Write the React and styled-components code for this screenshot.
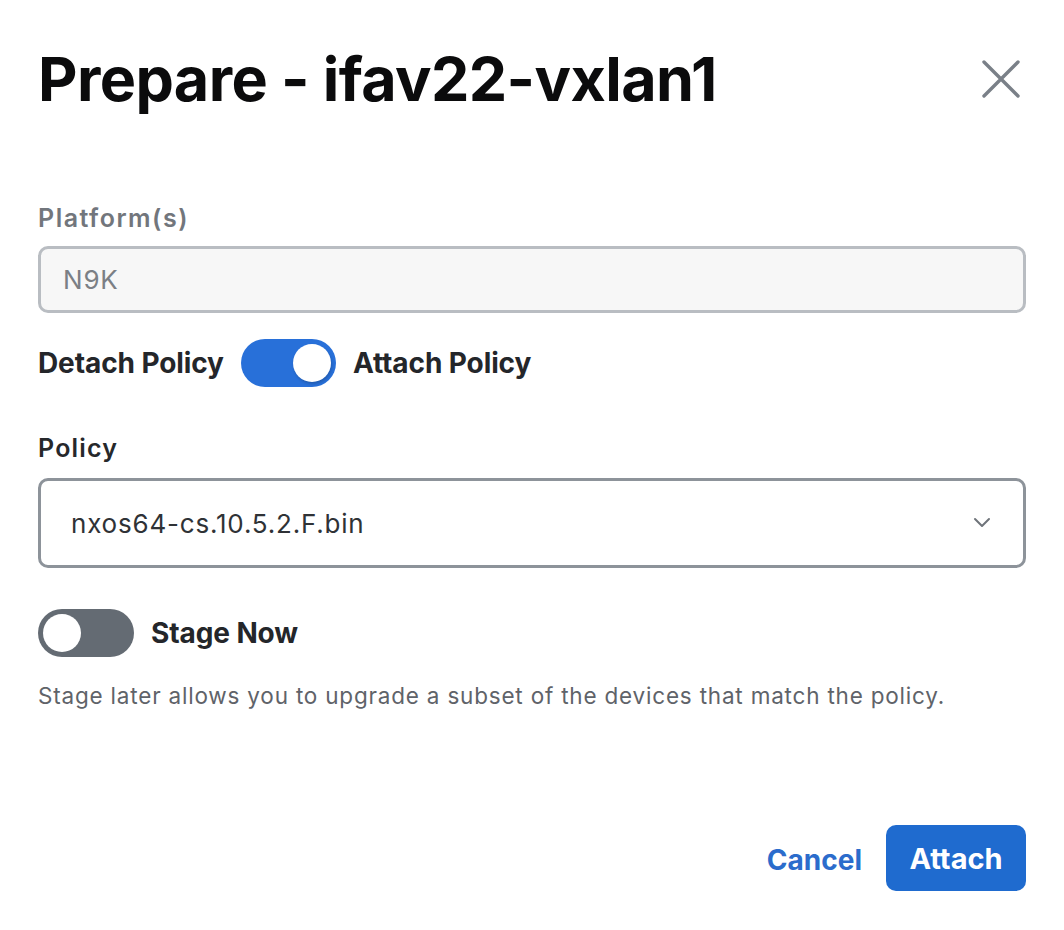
import React, { useState } from "react";
import styled, { createGlobalStyle } from "styled-components";

const Global = createGlobalStyle`
  html, body { margin: 0; padding: 0; background: #ffffff; }
  body { font-family: Inter, "Noto Sans", "Liberation Sans", sans-serif; -webkit-font-smoothing: antialiased; }
  * { box-sizing: border-box; }
`;

const Dialog = styled.div`
  width: 1064px;
  height: 930px;
  background: #fff;
  padding: 40px 38px 39px 38px;
  display: flex;
  flex-direction: column;
`;

const Header = styled.div`
  display: flex;
  align-items: center;
  justify-content: space-between;
  height: 78px;
`;

const Title = styled.h1`
  margin: 0;
  font-size: 61px;
  font-weight: 700;
  letter-spacing: -0.6px;
  color: #0b0b0c;
  line-height: 1;
`;

const CloseButton = styled.button`
  border: 0;
  background: none;
  padding: 0;
  width: 44px;
  height: 44px;
  margin-right: 3px;
  display: flex;
  align-items: center;
  justify-content: center;
  cursor: pointer;
`;

const Body = styled.div`
  margin-top: 84px;
  display: flex;
  flex-direction: column;
`;

const Label = styled.div`
  font-size: 25px;
  font-weight: 600;
  letter-spacing: ${(p) => (p.$muted ? 1.5 : 1.2)}px;
  color: ${(p) => (p.$muted ? "#72767c" : "#26282b")};
  line-height: 32px;
  margin-top: ${(p) => p.$mt || 0}px;
  margin-bottom: ${(p) => p.$gap || 12}px;
`;

const Field = styled.div`
  width: 988px;
  height: ${(p) => p.$h}px;
  border: 3px solid ${(p) => p.$border};
  border-radius: 10px;
  background: ${(p) => p.$bg};
  display: flex;
  align-items: center;
  justify-content: space-between;
  padding: 0 ${(p) => p.$pr}px 0 ${(p) => p.$pl}px;
  font-size: 26px;
  letter-spacing: 0.8px;
  color: ${(p) => p.$color};
`;

const ToggleRow = styled.div`
  display: flex;
  align-items: center;
  gap: ${(p) => p.$gap}px;
  height: 50px;
  margin-top: ${(p) => p.$mt}px;
`;

const ToggleLabel = styled.span`
  font-size: 28px;
  font-weight: 700;
  color: #24262a;
  letter-spacing: -0.1px;
`;

const Track = styled.button`
  position: relative;
  width: ${(p) => p.$w}px;
  height: 48px;
  border-radius: 24px;
  border: 0;
  padding: 0;
  background: ${(p) => (p.$on ? "#2870d9" : "#646b73")};
  cursor: pointer;
  flex: none;
`;

const Knob = styled.span`
  position: absolute;
  top: 5px;
  left: ${(p) => (p.$on ? p.$w - 43 : 5)}px;
  width: 38px;
  height: 38px;
  border-radius: 50%;
  background: #fff;
  box-shadow: ${(p) => (p.$on ? "1px 2px 3px rgba(0,0,0,0.18)" : "none")};
`;

const Help = styled.p`
  margin: 23px 0 0 0;
  font-size: 22.5px;
  letter-spacing: 0.8px;
  color: #5f6369;
  line-height: 30px;
`;

const Footer = styled.div`
  margin-top: auto;
  display: flex;
  justify-content: flex-end;
  align-items: center;
  gap: 24px;
`;

const TextButton = styled.button`
  border: 0;
  background: none;
  font-family: inherit;
  font-size: 28px;
  font-weight: 700;
  color: #2b6ccc;
  padding: 0;
  margin-top: 4px;
  cursor: pointer;
`;

const PrimaryButton = styled.button`
  border: 0;
  width: 140px;
  height: 66px;
  border-radius: 10px;
  background: #1f6bcf;
  color: #fff;
  font-family: inherit;
  font-size: 29px;
  font-weight: 700;
  cursor: pointer;
`;

function Toggle({ on, w, onClick }) {
  return (
    <Track $on={on} $w={w} onClick={onClick}>
      <Knob $on={on} $w={w} />
    </Track>
  );
}

export default function App() {
  const [attach, setAttach] = useState(true);
  const [stage, setStage] = useState(false);
  return (
    <>
      <Global />
      <Dialog>
        <Header>
          <Title>Prepare - ifav22-vxlan1</Title>
          <CloseButton aria-label="Close">
            <svg width="40" height="40" viewBox="0 0 40 40">
              <path d="M3 3 L37 37 M37 3 L3 37" stroke="#7a8088" strokeWidth="3.4" strokeLinecap="round" />
            </svg>
          </CloseButton>
        </Header>
        <Body>
          <Label $muted>Platform(s)</Label>
          <Field $h={67} $border="#b9bdc2" $bg="#f7f7f7" $pl={22} $pr={20} $color="#7b7f85">
            N9K
          </Field>
          <ToggleRow $gap={17} $mt={25}>
            <ToggleLabel>Detach Policy</ToggleLabel>
            <Toggle on={attach} w={95} onClick={() => setAttach(!attach)} />
            <ToggleLabel>Attach Policy</ToggleLabel>
          </ToggleRow>
          <Label $gap={14} $mt={44}>Policy</Label>
          <Field $h={90} $border="#8d939a" $bg="#fff" $pl={30} $pr={32} $color="#2f3236">
            nxos64-cs.10.5.2.F.bin
            <svg width="18" height="12" viewBox="0 0 18 12">
              <path d="M2 2 L9 9 L16 2" fill="none" stroke="#6f747a" strokeWidth="2" strokeLinecap="round" strokeLinejoin="round" />
            </svg>
          </Field>
          <ToggleRow $gap={17} $mt={40}>
            <Toggle on={stage} w={96} onClick={() => setStage(!stage)} />
            <ToggleLabel>Stage Now</ToggleLabel>
          </ToggleRow>
          <Help>Stage later allows you to upgrade a subset of the devices that match the policy.</Help>
        </Body>
        <Footer>
          <TextButton>Cancel</TextButton>
          <PrimaryButton>Attach</PrimaryButton>
        </Footer>
      </Dialog>
    </>
  );
}
